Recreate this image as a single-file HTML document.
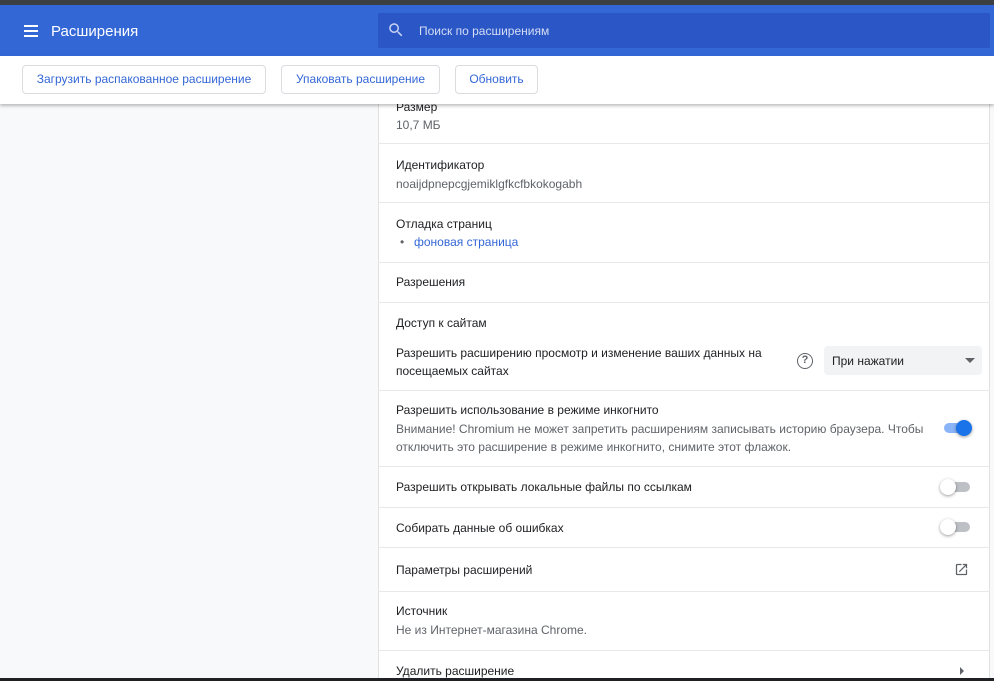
<!DOCTYPE html>
<html><head><meta charset="utf-8"><style>
*{margin:0;padding:0;box-sizing:border-box}
html,body{width:994px;height:681px;overflow:hidden}
body{background:#f8f9fa;font-family:"Liberation Sans",Arial,sans-serif;position:relative;font-size:12px;color:#202124}
.a{position:absolute}
.top{left:0;top:0;width:994px;height:5px;background:#3c4043}
.hdr{left:0;top:5px;width:994px;height:51px;background:#3367d6}
.srch{left:378px;top:13px;width:612px;height:35px;background:#2a56c6;border-radius:2px}
.tb{left:0;top:56px;width:994px;height:48px;background:#fff;box-shadow:0 2px 3px rgba(0,0,0,.25);z-index:3}
.btn{top:9px;height:29px;border:1px solid #dadce0;border-radius:4px;color:#3367d6;font-size:12px;line-height:27px;text-align:center;background:#fff}
.card{left:378px;top:90px;width:612px;height:591px;background:#fff;border-left:1px solid #e0e0e0;border-right:1px solid #e0e0e0}
.sep{left:378px;width:612px;height:1px;background:#e8e8e8}
.t{left:396px;font-size:12px;color:#202124;white-space:nowrap}
.s{color:#5f6368}
.tg{width:26px;height:10px;border-radius:5px;background:#bdc1c6}
.kn{width:16px;height:16px;border-radius:50%;background:#fff;box-shadow:0 1px 3px rgba(0,0,0,.4)}
</style></head><body>
<div class="a top"></div>
<div class="a hdr"></div>
<div class="a" style="left:24px;top:25px;width:14px;height:2px;background:#fff;box-shadow:0 5px 0 #fff,0 10px 0 #fff"></div>
<div class="a" style="left:51px;top:23px;color:#fff;font-size:15px">Расширения</div>
<div class="a srch"></div>
<svg class="a" style="left:387px;top:21px" width="18" height="18" viewBox="0 0 24 24"><path d="M15.5 14h-.8l-.3-.3A6.5 6.5 0 1 0 9.5 16a6.5 6.5 0 0 0 4.2-1.6l.3.3v.8l5 5 1.5-1.5-5-5zm-6 0a4.5 4.5 0 1 1 0-9 4.5 4.5 0 0 1 0 9z" fill="#c6d3f3"/></svg>
<div class="a" style="left:419px;top:24px;color:#d5def5;font-size:12px">Поиск по расширениям</div>
<div class="a card"></div>
<div class="a tb">
<div class="a btn" style="left:22px;width:244px">Загрузить распакованное расширение</div>
<div class="a btn" style="left:281px;width:159px">Упаковать расширение</div>
<div class="a btn" style="left:455px;width:83px">Обновить</div>
</div>
<div class="a t" style="top:100px">Размер</div>
<div class="a t s" style="top:118px">10,7 МБ</div>
<div class="a sep" style="top:143px"></div>
<div class="a t" style="top:158px">Идентификатор</div>
<div class="a t s" style="top:177px">noaijdpnepcgjemiklgfkcfbkokogabh</div>
<div class="a sep" style="top:202px"></div>
<div class="a t" style="top:217px">Отладка страниц</div>
<div class="a t" style="top:235px;left:400px;color:#5f6368">•</div>
<div class="a t" style="top:235px;left:414px;color:#3367d6">фоновая страница</div>
<div class="a sep" style="top:262px"></div>
<div class="a t" style="top:275px">Разрешения</div>
<div class="a sep" style="top:302px"></div>
<div class="a t" style="top:316px">Доступ к сайтам</div>
<div class="a t" style="top:344px;line-height:18px">Разрешить расширению просмотр и изменение ваших данных на<br>посещаемых сайтах</div>
<div class="a" style="left:797px;top:353px;width:16px;height:16px;border:1.5px solid #5f6368;border-radius:50%;font-size:11px;font-weight:bold;color:#5f6368;text-align:center;line-height:13px">?</div>
<div class="a" style="left:824px;top:346px;width:158px;height:29px;background:#f1f3f4;border-radius:4px"></div>
<div class="a t" style="left:832px;top:354px">При нажатии</div>
<div class="a" style="left:965px;top:358px;border-left:5px solid transparent;border-right:5px solid transparent;border-top:5px solid #5f6368"></div>
<div class="a sep" style="top:390px"></div>
<div class="a t" style="top:403px">Разрешить использование в режиме инкогнито</div>
<div class="a t s" style="top:420px;line-height:18px">Внимание! Chromium не может запретить расширениям записывать историю браузера. Чтобы<br>отключить это расширение в режиме инкогнито, снимите этот флажок.</div>
<div class="a tg" style="left:944px;top:423px;background:#8ab4f8"></div>
<div class="a kn" style="left:956px;top:420px;background:#1a73e8"></div>
<div class="a sep" style="top:466px"></div>
<div class="a t" style="top:480px">Разрешить открывать локальные файлы по ссылкам</div>
<div class="a tg" style="left:944px;top:482px"></div>
<div class="a kn" style="left:940px;top:479px"></div>
<div class="a sep" style="top:507px"></div>
<div class="a t" style="top:521px">Собирать данные об ошибках</div>
<div class="a tg" style="left:944px;top:522px"></div>
<div class="a kn" style="left:940px;top:519px"></div>
<div class="a sep" style="top:547px"></div>
<div class="a t" style="top:563px">Параметры расширений</div>
<svg class="a" style="left:954px;top:562px" width="15" height="15" viewBox="0 0 24 24"><path d="M19 19H5V5h7V3H5a2 2 0 0 0-2 2v14a2 2 0 0 0 2 2h14a2 2 0 0 0 2-2v-7h-2v7zM14 3v2h3.6l-9.8 9.8 1.4 1.4L19 6.4V10h2V3h-7z" fill="#5f6368"/></svg>
<div class="a sep" style="top:591px"></div>
<div class="a t" style="top:604px">Источник</div>
<div class="a t s" style="top:623px">Не из Интернет-магазина Chrome.</div>
<div class="a sep" style="top:650px"></div>
<div class="a t" style="top:664px">Удалить расширение</div>
<div class="a" style="left:960px;top:667px;border-top:4px solid transparent;border-bottom:4px solid transparent;border-left:4px solid #5f6368"></div>
<div class="a" style="left:0;top:678px;width:994px;height:3px;background:#202124"></div>
</body></html>
